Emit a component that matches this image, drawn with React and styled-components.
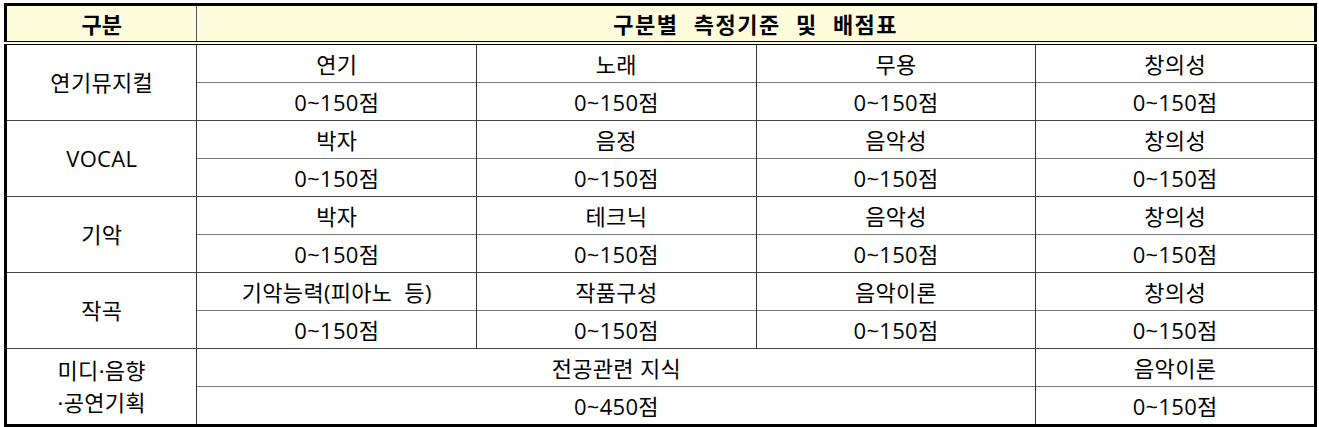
import React from "react";
import styled, { createGlobalStyle } from "styled-components";

const Global = createGlobalStyle`
  html, body { margin: 0; padding: 0; background: #fff; }
  body { font-family: "Open Sans", "Noto Sans CJK KR", sans-serif; color: #000; }
`;

const Page = styled.div`
  padding: 3px 2px 0 4px;
`;

const Table = styled.table`
  width: 1313px;
  border-collapse: collapse;
  table-layout: fixed;
  border: 3px solid #000;
  font-size: 22px;
  line-height: 1;
`;

const HeadCell = styled.th`
  background: #fdfddd;
  height: 35px;
  padding: 0;
  font-weight: 700;
  font-size: 22px;
  text-align: center;
  vertical-align: middle;
  border-right: 1px solid #555;
  border-bottom: 4px double #000;
  letter-spacing: ${(p) => (p.$wide ? "1.5px" : "0")};
  word-spacing: ${(p) => (p.$wide ? "8px" : "0")};
`;

const Cell = styled.td`
  height: 37px;
  padding: 0;
  text-align: center;
  vertical-align: middle;
  border-left: 1px solid #333;
  border-top: 1px solid ${(p) => (p.$group ? "#444" : "#777")};
  white-space: pre;
  letter-spacing: 0.3px;
`;

const NameCell = styled(Cell)`
  line-height: 1.45;
`;

const groups = [
  { name: "연기뮤지컬", items: ["연기", "노래", "무용", "창의성"] },
  { name: "VOCAL", items: ["박자", "음정", "음악성", "창의성"] },
  { name: "기악", items: ["박자", "테크닉", "음악성", "창의성"] },
  { name: "작곡", items: ["기악능력(피아노  등)", "작품구성", "음악이론", "창의성"] },
];

const Score = "0~150점";

export default function App() {
  return (
    <Page>
      <Global />
      <Table>
        <colgroup>
          <col style={{ width: 191 }} />
          <col style={{ width: 279 }} />
          <col style={{ width: 279 }} />
          <col style={{ width: 279 }} />
          <col style={{ width: 279 }} />
        </colgroup>
        <thead>
          <tr>
            <HeadCell>구분</HeadCell>
            <HeadCell colSpan={4} $wide>
              구분별 측정기준 및 배점표
            </HeadCell>
          </tr>
        </thead>
        <tbody>
          {groups.map((g) => (
            <React.Fragment key={g.name}>
              <tr>
                <NameCell rowSpan={2} $group>
                  {g.name}
                </NameCell>
                {g.items.map((it, i) => (
                  <Cell key={i} $group>
                    {it}
                  </Cell>
                ))}
              </tr>
              <tr>
                {g.items.map((_, i) => (
                  <Cell key={i}>{Score}</Cell>
                ))}
              </tr>
            </React.Fragment>
          ))}
          <tr>
            <NameCell rowSpan={2} $group>
              미디·음향
              {"\n"}·공연기획
            </NameCell>
            <Cell colSpan={3} $group>
              전공관련 지식
            </Cell>
            <Cell $group>음악이론</Cell>
          </tr>
          <tr>
            <Cell colSpan={3}>0~450점</Cell>
            <Cell>{Score}</Cell>
          </tr>
        </tbody>
      </Table>
    </Page>
  );
}
